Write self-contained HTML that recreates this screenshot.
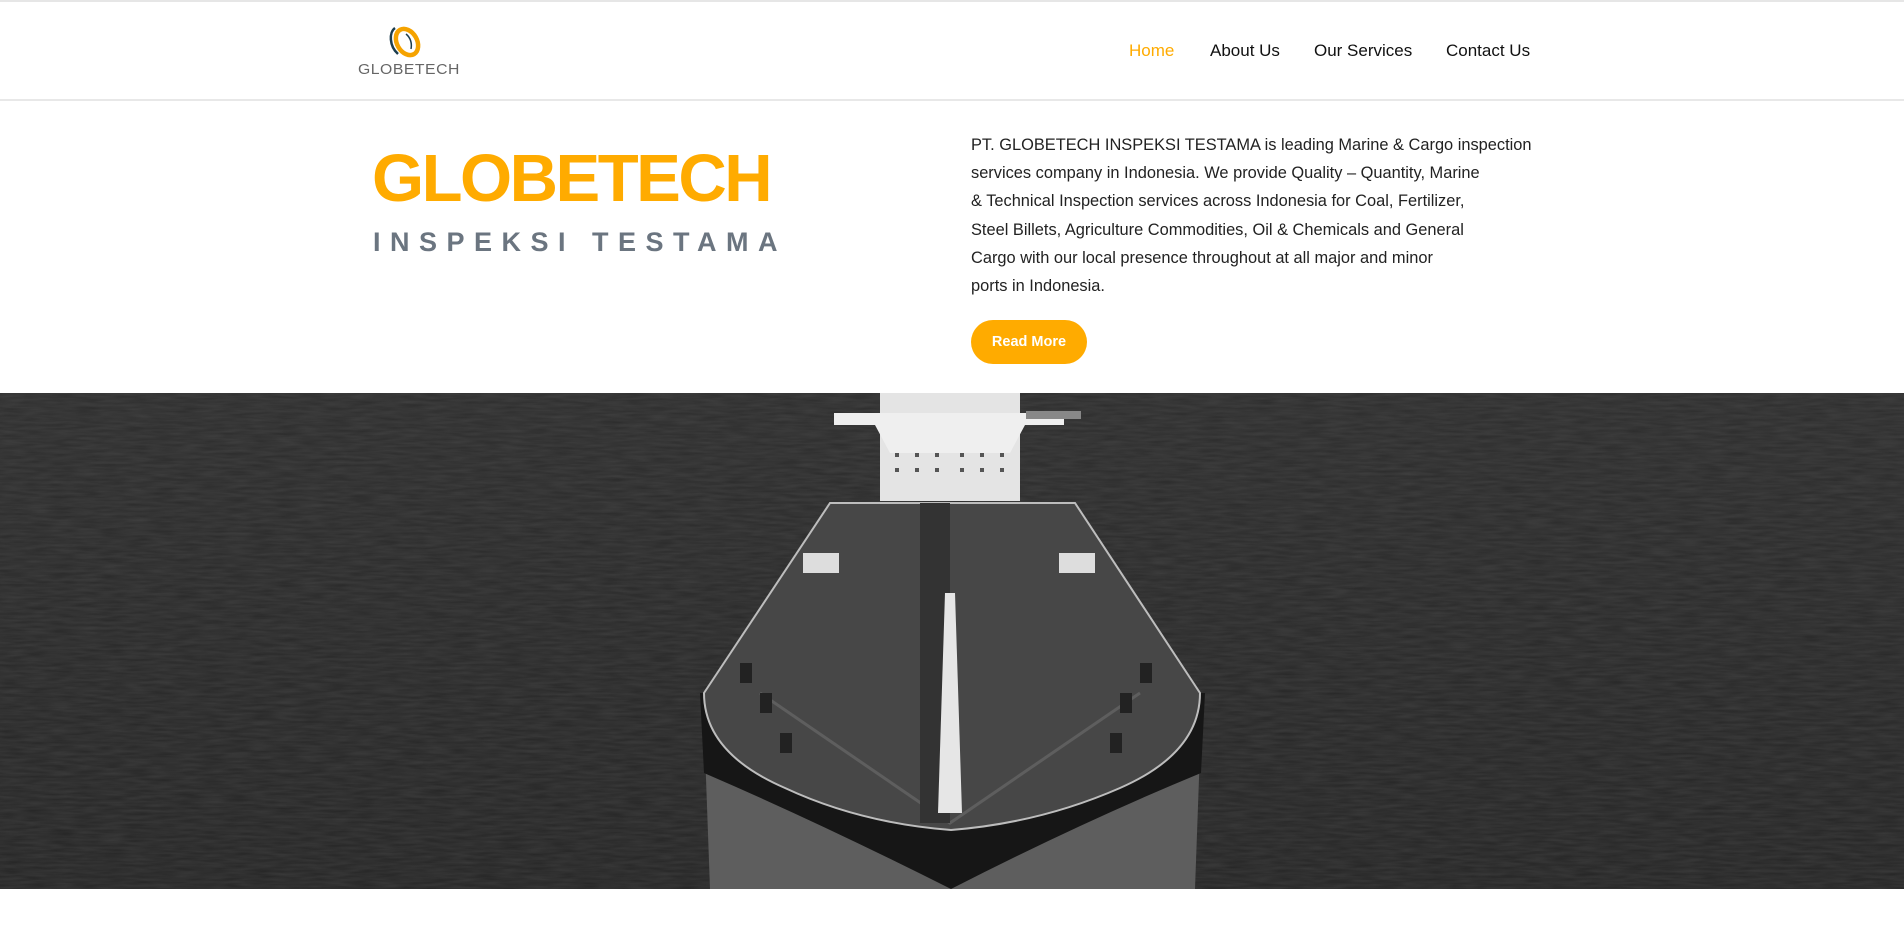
<!DOCTYPE html>
<html><head><meta charset="utf-8">
<style>
*{margin:0;padding:0;box-sizing:border-box}
html,body{width:1904px;height:942px;background:#fff;overflow:hidden;font-family:"Liberation Sans",sans-serif}
.topline{position:absolute;left:0;top:0;width:1904px;height:2px;background:#e6e6e6}
header{position:absolute;left:0;top:2px;width:1904px;height:99px;border-bottom:2px solid #e8e8e8;background:#fff}
.logo{position:absolute;left:356px;top:20px}
.logotext{position:absolute;left:358px;top:59px;font-size:15px;color:#666;letter-spacing:0.5px;transform:scaleX(1.05);transform-origin:left;font-weight:normal}
nav{position:absolute;top:39px;left:0;font-size:17px;color:#111}
nav span{position:absolute;white-space:nowrap}
h1{position:absolute;left:372px;top:145px;font-size:67px;font-weight:bold;color:#ffab00;letter-spacing:-2.5px;line-height:1}
h2{position:absolute;left:373px;top:229px;font-size:27px;font-weight:bold;color:#6b7580;letter-spacing:9.5px;line-height:1;white-space:nowrap}
p{position:absolute;left:971px;top:131px;width:620px;font-size:16.4px;line-height:28.2px;color:#222;white-space:nowrap}
.btn{position:absolute;left:971px;top:320px;width:116px;height:44px;border-radius:22px;background:#ffab00;color:#fff;font-weight:bold;font-size:14.5px;text-align:center;line-height:44px}
.hero{position:absolute;left:0;top:393px;width:1904px;height:496px;overflow:hidden;background:#2a2a2a}
</style></head><body>
<div class="topline"></div>
<header>
<svg class="logo" width="80" height="44" viewBox="0 0 80 44">
<path d="M39 6 C33 10,33 24,42 32" stroke="#1c3d4e" stroke-width="2.5" fill="none"/>
<ellipse cx="51" cy="20" rx="10" ry="14" transform="rotate(-30 51 20)" stroke="#f5a300" stroke-width="4.5" fill="none"/>
<path d="M50 12 C55 16,56 22,55 27" stroke="#1c3d4e" stroke-width="1.5" fill="none"/>
</svg>
<div class="logotext">GLOBETECH</div>
<nav>
<span style="left:1129px;color:#ffab00">Home</span>
<span style="left:1210px">About Us</span>
<span style="left:1314px">Our Services</span>
<span style="left:1446px">Contact Us</span>
</nav>
</header>
<h1>GLOBETECH</h1>
<h2>INSPEKSI TESTAMA</h2>
<p>PT. GLOBETECH INSPEKSI TESTAMA is leading Marine &amp; Cargo inspection<br>services company in Indonesia. We provide Quality – Quantity, Marine<br>&amp; Technical Inspection services across Indonesia for Coal, Fertilizer,<br>Steel Billets, Agriculture Commodities, Oil &amp; Chemicals and General<br>Cargo with our local presence throughout at all major and minor<br>ports in Indonesia.</p>
<div class="btn">Read More</div>
<div class="hero">
<svg width="1904" height="496" viewBox="0 0 1904 496">
<defs>
<filter id="n"><feTurbulence type="fractalNoise" baseFrequency="0.04 0.35" numOctaves="2" seed="3"/><feColorMatrix values="0 0 0 0 0.35 0 0 0 0 0.35 0 0 0 0 0.35 0 0 0 0.18 0"/></filter>
<linearGradient id="sea" x1="0" y1="0" x2="0" y2="1"><stop offset="0" stop-color="#2c2c2c"/><stop offset="1" stop-color="#242424"/></linearGradient>
</defs>
<rect width="1904" height="496" fill="url(#sea)"/>
<rect width="1904" height="496" filter="url(#n)"/>
<path d="M704 330 L710 496 L1195 496 L1201 330 Z" fill="#5e5e5e"/>
<path d="M700 300 L704 380 Q820 430 951 496 Q1080 430 1201 380 L1205 300 Z" fill="#161616"/>
<path d="M830 110 L1075 110 L1200 300 Q1200 360 1120 395 Q1040 430 951 437 Q860 430 785 395 Q704 360 704 300 Z" fill="#474747" stroke="#bdbdbd" stroke-width="2"/>
<path d="M760 300 L950 430 L1140 300" stroke="#5e5e5e" stroke-width="3" fill="none"/>
<rect x="920" y="110" width="30" height="320" fill="#333"/>
<g fill="#222"><rect x="740" y="270" width="12" height="20"/><rect x="760" y="300" width="12" height="20"/><rect x="1140" y="270" width="12" height="20"/><rect x="1120" y="300" width="12" height="20"/><rect x="780" y="340" width="12" height="20"/><rect x="1110" y="340" width="12" height="20"/></g>
<rect x="803" y="160" width="36" height="20" fill="#ddd"/><rect x="1059" y="160" width="36" height="20" fill="#ddd"/>
<path d="M945 200 L955 200 L962 420 L938 420 Z" fill="#e6e6e6"/>
<rect x="880" y="0" width="140" height="108" fill="#e4e4e4"/>
<path d="M834 20 L1064 20 L1064 32 L1025 32 L1010 60 L890 60 L875 32 L834 32 Z" fill="#efefef"/>
<g fill="#555"><rect x="895" y="60" width="4" height="4"/><rect x="915" y="60" width="4" height="4"/><rect x="935" y="60" width="4" height="4"/><rect x="960" y="60" width="4" height="4"/><rect x="980" y="60" width="4" height="4"/><rect x="1000" y="60" width="4" height="4"/><rect x="895" y="75" width="4" height="4"/><rect x="915" y="75" width="4" height="4"/><rect x="935" y="75" width="4" height="4"/><rect x="960" y="75" width="4" height="4"/><rect x="980" y="75" width="4" height="4"/><rect x="1000" y="75" width="4" height="4"/></g>
<rect x="1026" y="18" width="55" height="8" fill="#888"/>
</svg>
</div>
</body></html>
